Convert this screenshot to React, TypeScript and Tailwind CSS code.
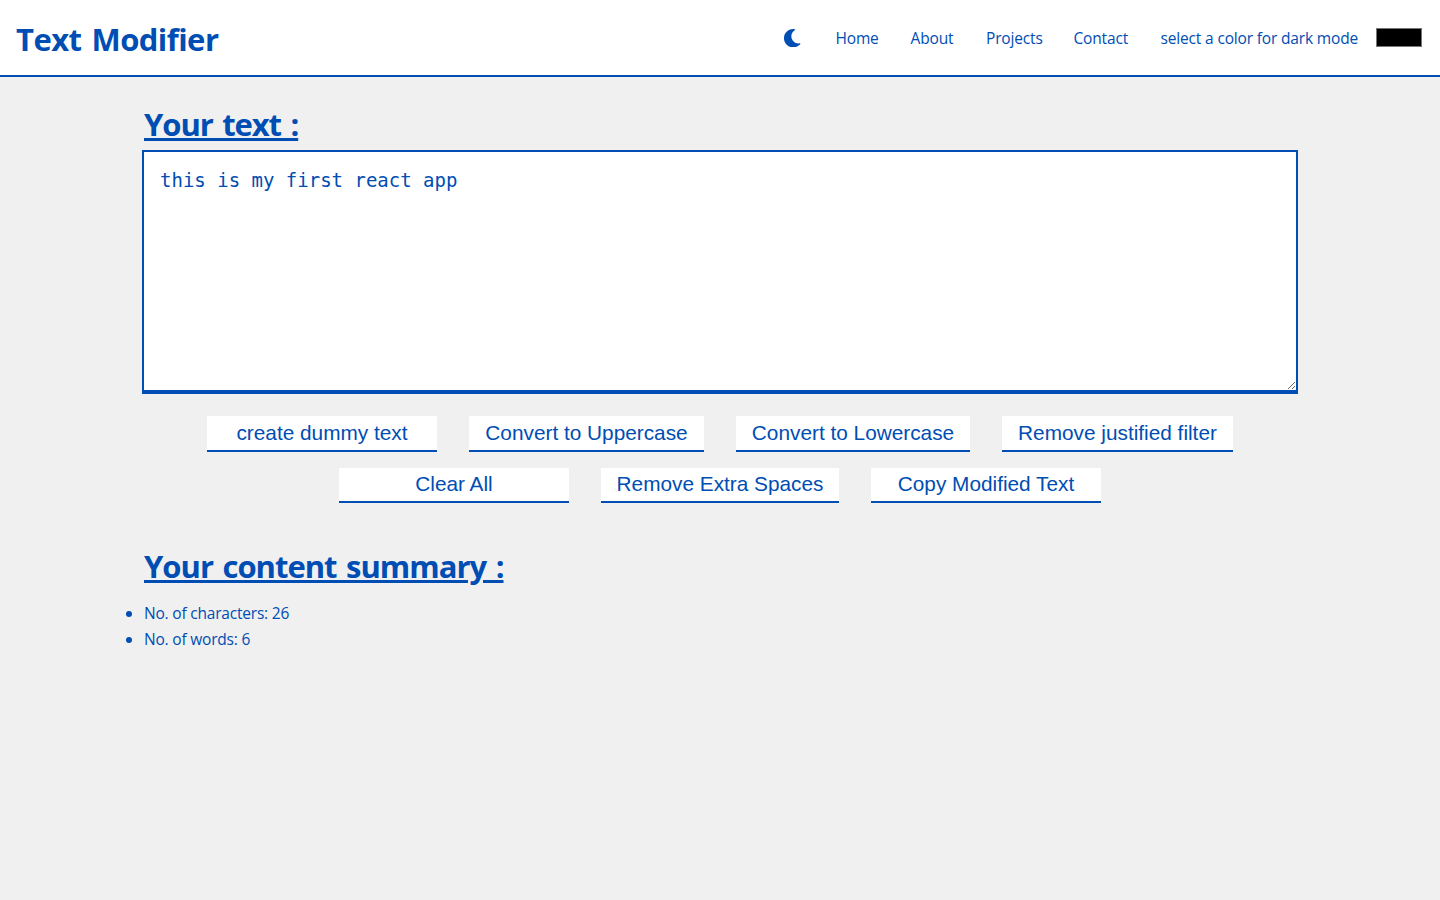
import React, { useState } from "react";
import { FaMoon } from "react-icons/fa";

const navLinks = [
  { label: "Home", width: "w-[43px]" },
  { label: "About", width: "w-[43.5px]" },
  { label: "Projects", width: "w-[55.5px]" },
  { label: "Contact", width: "w-[55px]" },
];

function Navbar() {
  return (
    <header className="flex h-[77px] items-center border-b-2 border-[#004db3] bg-white pl-4 pr-[18px]">
      <h1 className="pt-0.5 text-[31px] leading-[44px] font-bold tracking-[-0.55px] [word-spacing:2.5px] whitespace-nowrap">
        Text Modifier
      </h1>
      <nav className="ml-auto flex items-center gap-8 text-[15.5px] leading-6 tracking-[-0.16px] whitespace-nowrap">
        <FaMoon className="mt-px mr-[2.5px] size-[18.4px]" />
        {navLinks.map((l) => (
          <a key={l.label} href="#" className={l.width}>
            {l.label}
          </a>
        ))}
        <label className="flex items-center">
          <span className="w-[215.5px]">select a color for dark mode</span>
          <span className="h-[19px] w-[46px] border border-[#767676] bg-black" />
        </label>
      </nav>
    </header>
  );
}

function ActionButton({ label, className }: { label: string; className: string }) {
  return (
    <button
      type="button"
      className={`flex justify-center border-b-2 border-[#004db3] bg-white font-['Liberation_Sans',Arial,sans-serif] text-[20.8px] leading-6 whitespace-nowrap ${className}`}
    >
      {label}
    </button>
  );
}

export default function App() {
  const [text, setText] = useState("this is my first react app");
  const words = text.split(/\s+/).filter(Boolean).length;

  return (
    <div className="min-h-screen bg-[#f0f0f0] font-['Open_Sans','Noto_Sans',sans-serif] text-[#004db3]">
      <Navbar />
      <main className="px-[142px] pt-[25px]">
        <h2 className="pl-0.5 text-[31px] leading-[44px] font-bold tracking-[-1.08px] [word-spacing:2.5px] underline decoration-[3px] underline-offset-2">
          Your text :
        </h2>
        <textarea
          value={text}
          onChange={(e) => setText(e.target.value)}
          spellCheck={false}
          className="mt-1 block h-[244px] w-full border-2 border-b-4 border-[#004db3] bg-white p-4 font-['DejaVu_Sans_Mono',monospace] text-[19px] leading-6 outline-none"
        />
        <div className="mt-[22px] flex flex-col items-center gap-4">
          <div className="flex gap-8">
            <ActionButton label="create dummy text" className="h-9 w-[230px] pt-[5px]" />
            <ActionButton label="Convert to Uppercase" className="h-9 w-[235px] pt-[5px]" />
            <ActionButton label="Convert to Lowercase" className="h-9 w-[234px] pt-[5px]" />
            <ActionButton label="Remove justified filter" className="h-9 w-[231px] pt-[5px]" />
          </div>
          <div className="flex gap-8">
            <ActionButton label="Clear All" className="h-[35px] w-[230px] pt-1" />
            <ActionButton label="Remove Extra Spaces" className="h-[35px] w-[238px] pt-1" />
            <ActionButton label="Copy Modified Text" className="h-[35px] w-[230px] pt-1" />
          </div>
        </div>
        <h2 className="mt-[41px] pl-0.5 text-[31px] leading-[44px] font-bold tracking-[-1.01px] [word-spacing:2.5px] underline decoration-[3px] underline-offset-2">
          Your content summary :
        </h2>
        <ul className="mt-3 list-disc pl-0.5 text-[15.5px] leading-[26px] tracking-[-0.2px]">
          <li>No. of characters: {text.length}</li>
          <li>No. of words: {words}</li>
        </ul>
      </main>
    </div>
  );
}
